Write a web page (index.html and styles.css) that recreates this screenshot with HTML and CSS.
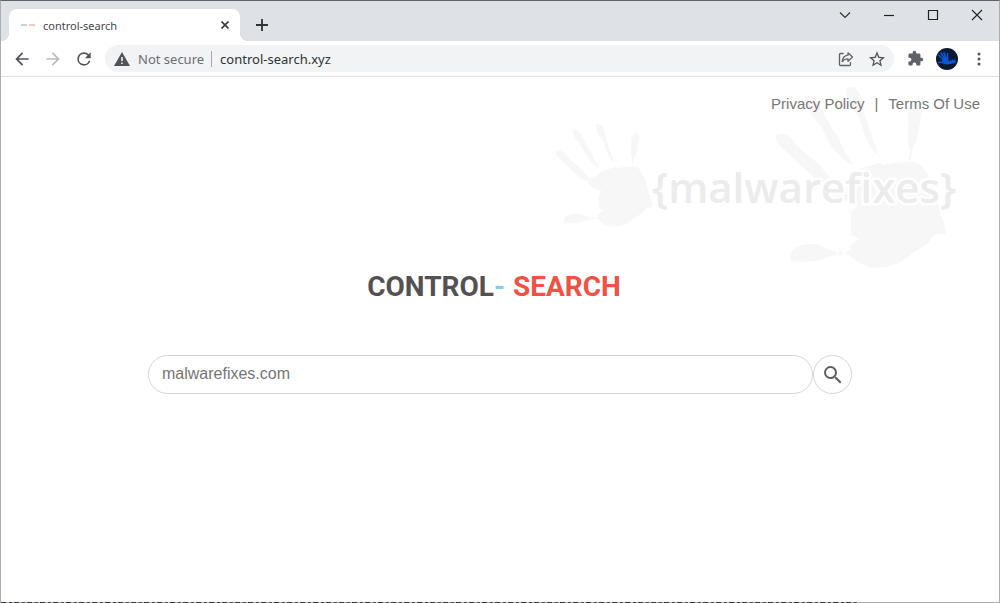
FILE: index.html
```html
<!DOCTYPE html>
<html lang="en">
<head>
    <meta charset="UTF-8">
    <meta name="viewport" content="width=device-width, initial-scale=1.0">
    <title>control-search</title>
    <link rel="stylesheet" href="styles.css">
</head>
<body>
    <div class="window">
        <header class="tab-bar">
            <div class="tab">
                <span class="favicon"></span>
                <span class="tab-title">control-search</span>
                <button class="icon-btn tab-close" aria-label="Close tab">
                    <svg width="8" height="8" viewBox="0 0 8 8"><path d="M.5.5l7 7M7.5.5l-7 7" stroke="#3c4043" stroke-width="1.7"/></svg>
                </button>
            </div>
            <button class="icon-btn new-tab" aria-label="New tab">
                <svg width="12" height="12" viewBox="0 0 12 12"><path d="M6 0v12M0 6h12" stroke="#303236" stroke-width="1.8"/></svg>
            </button>
            <div class="window-controls">
                <button class="icon-btn" aria-label="Search tabs">
                    <svg width="12" height="12" viewBox="0 0 12 12"><path d="M1 3.5l5 5 5-5" fill="none" stroke="#333" stroke-width="1.2"/></svg>
                </button>
                <button class="icon-btn" aria-label="Minimize">
                    <svg width="12" height="12" viewBox="0 0 12 12"><path d="M1 6.5h10" stroke="#222" stroke-width="1.2"/></svg>
                </button>
                <button class="icon-btn" aria-label="Maximize">
                    <svg width="12" height="12" viewBox="0 0 12 12"><path d="M1.5 1.5h9v9h-9z" fill="none" stroke="#222" stroke-width="1.2"/></svg>
                </button>
                <button class="icon-btn" aria-label="Close">
                    <svg width="12" height="12" viewBox="0 0 12 12"><path d="M1 1l10 10M11 1L1 11" stroke="#222" stroke-width="1.1"/></svg>
                </button>
            </div>
        </header>

        <div class="toolbar">
            <nav class="nav-buttons">
                <button class="icon-btn" aria-label="Back">
                    <svg width="20" height="20" viewBox="0 0 24 24"><path fill="#505357" d="M20 11H7.83l5.59-5.59L12 4l-8 8 8 8 1.41-1.41L7.83 13H20z"/></svg>
                </button>
                <button class="icon-btn" aria-label="Forward" disabled>
                    <svg width="20" height="20" viewBox="0 0 24 24"><path fill="#babcbe" d="M12 4l-1.41 1.41L16.17 11H4v2h12.17l-5.58 5.59L12 20l8-8z"/></svg>
                </button>
                <button class="icon-btn" aria-label="Reload">
                    <svg width="20" height="20" viewBox="0 0 24 24"><path fill="#505357" d="M17.65 6.35A7.96 7.96 0 0 0 12 4a8 8 0 1 0 7.73 10h-2.08A6 6 0 1 1 12 6c1.66 0 3.14.69 4.22 1.78L13 11h7V4z"/></svg>
                </button>
            </nav>
            <div class="address-bar">
                <svg width="16" height="14" viewBox="0 0 16 14"><path fill="#505357" d="M8 0l8 14H0z"/><path d="M8 5v4M8 10.5v1.6" stroke="#f1f3f4" stroke-width="1.6"/></svg>
                <label class="security" for="url">Not secure</label>
                <input class="url" id="url" type="text" value="control-search.xyz">
                <button class="icon-btn" aria-label="Share this page">
                    <svg width="16" height="16" viewBox="0 0 16 16" fill="none" stroke="#5f6368" stroke-width="1.3" stroke-linejoin="round"><path d="M5.5 2.5h-3a1 1 0 0 0-1 1v10a1 1 0 0 0 1 1h9a1 1 0 0 0 1-1V11"/><path d="M10 1.8L14.5 6 10 10.2V7.8C7.4 7.8 5.6 8.6 4.2 10.5 4.6 7 6.5 4.6 10 4.200z"/></svg>
                </button>
                <button class="icon-btn" aria-label="Bookmark this page">
                    <svg width="16" height="16" viewBox="0 0 24 24"><path fill="#505357" d="M24 9.24l-8.630-.740L12 .5 8.630 8.500 0 9.240l6.550 5.680L4.580 23.400 12 18.900l7.420 4.500-1.970-8.480zM12 16.650l-4.520 2.730 1.200-5.140-3.980-3.450 5.250-.450L12 5.500l2.050 4.840 5.250.450-3.980 3.450 1.200 5.140z"/></svg>
                </button>
            </div>
            <div class="actions">
                <button class="icon-btn" aria-label="Extensions">
                    <svg width="17" height="17" viewBox="0 0 24 24"><path fill="#5f6368" d="M20.5 11H19V7a2 2 0 0 0-2-2h-4V3.500a2.500 2.500 0 0 0-5 0V5H4a2 2 0 0 0-2 2v3.800h1.500a2.700 2.700 0 0 1 0 5.400H2V20a2 2 0 0 0 2 2h3.800v-1.500a2.700 2.700 0 0 1 5.400 0V22H17a2 2 0 0 0 2-2v-4h1.500a2.500 2.500 0 0 0 0-5z"/></svg>
                </button>
                <button class="icon-btn" aria-label="Profile">
                    <svg width="22" height="22" viewBox="0 0 22 22">
                        <circle cx="11" cy="11" r="11" fill="#0b1a30"/>
                        <g stroke="#0a56d6" stroke-width="1.6" stroke-linecap="round"><path d="M2.500 7l5 4.500M5 5l4 6M8 4.500l2 6M11.500 5.500V11M2.500 14.500l5-.500"/></g>
                        <path fill="#0a56d6" d="M6 11l5.500-2 1.500 5 1-2.500 1.500 1.500 1-2 1 1.500 2-1.500V15l-5 1-4 .500-4-1z"/>
                    </svg>
                </button>
                <button class="icon-btn" aria-label="Menu">
                    <svg width="4" height="14" viewBox="0 0 4 14" fill="#505357"><circle cx="2" cy="2" r="1.500"/><circle cx="2" cy="7" r="1.500"/><circle cx="2" cy="12" r="1.500"/></svg>
                </button>
            </div>
        </div>

        <main class="page">
            <svg class="watermark" width="410" height="190" viewBox="550 80 410 190">
                <defs>
                    <g id="hand" fill="#f7f7f7">
                        <path d="M48 214C58 209 70 213 76 222C86 236 99 246 112 256C124 266 136 280 148 296L162 291C171 289 176 280 185 274C197 267 211 268 224 261L232 265L252 261L282 259C298 262 306 276 312 292C321 308 324 330 329 350C333 360 340 372 338 382L318 384L308 398C294 408 276 419 263 430C247 438 229 442 216 440C198 439 184 430 175 420L164 415L174 411L176 402L190 391L177 385C175 370 175 354 178 343L188 335C172 330 158 322 148 316L144 304C132 304 118 292 108 282C94 269 80 256 68 244C58 236 46 229 48 214z"/>
                        <path d="M98 149C108 144 119 153 124 166C130 179 138 190 144 204C154 214 160 230 167 246L181 266C164 259 152 245 143 233C136 222 131 210 124 198C112 184 97 166 98 149z"/>
                        <path d="M167 136C173 128 184 130 189 140C195 152 197 168 200 182C207 197 212 216 218 233L222 248C211 239 204 226 199 211L188 180C178 170 168 153 167 136z"/>
                        <path d="M276 170C279 157 290 153 296 163C300 176 294 190 292 204C291 218 285 230 280 242L278 257L275 256L277 240C272 226 273 210 275 196C273 186 273 179 276 170z"/>
                        <path d="M72 421C75 405 94 399 112 400C127 401 136 410 150 413L154 417C142 418 134 426 120 428C104 430 84 432 72 428z"/>
                        <circle cx="159" cy="415" r="4"/>
                    </g>
                </defs>
                <use href="#hand" transform="translate(540 80) scale(.333)"/>
                <use href="#hand" transform="translate(748 10) scale(.585)"/>
                <text class="watermark-text" x="652" y="203">{malwarefixes}</text>
            </svg>

            <nav class="page-links">
                <a href="#">Privacy Policy</a>
                <span>|</span>
                <a href="#">Terms Of Use</a>
            </nav>

            <h1 class="logo">CONTROL<span class="dash">-</span><span class="accent">SEARCH</span></h1>

            <form class="search">
                <input class="search-input" type="text" value="malwarefixes.com" aria-label="Search">
                <button class="search-btn" type="submit" aria-label="Search">
                    <svg width="24" height="24" viewBox="0 0 24 24"><path fill="#5f5f5f" d="M15.5 14h-.79l-.28-.27A6.470 6.470 0 0 0 16 9.500 6.500 6.500 0 1 0 9.500 16c1.610 0 3.090-.590 4.230-1.570l.270.280v.790l5 4.990L20.490 19zm-6 0a4.500 4.500 0 1 1 0-9 4.500 4.500 0 0 1 0 9z"/></svg>
                </button>
            </form>
        </main>
        <div class="edge"></div>
    </div>
</body>
</html>
```
FILE: styles.css
```css
* {
    box-sizing: border-box;
}

body {
    margin: 0;
    background: #fff;
    font-family: "Liberation Sans", Arial, sans-serif;
}

.window {
    display: flex;
    flex-direction: column;
    min-height: 100vh;
    border: 1px solid #adadad;
    border-top-color: #626366;
    border-bottom: 0;
}

.icon-btn {
    display: flex;
    align-items: center;
    justify-content: center;
    padding: 0;
    border: 0;
    background: none;
}

.tab-bar {
    display: flex;
    height: 40px;
    padding-left: 8px;
    background: #dee1e6;
}

.tab {
    position: relative;
    display: flex;
    align-items: center;
    width: 231px;
    margin-top: 8px;
    padding: 0 9px 0 12px;
    background: #fff;
    border-radius: 8px 8px 0 0;
}

/* curved feet of the active tab */
.tab::before,
.tab::after {
    content: '';
    position: absolute;
    bottom: 0;
    width: 8px;
    height: 8px;
}

.tab::before {
    left: -8px;
    background: radial-gradient(circle at 0 0, #dee1e6 8px, #fff 8px);
}

.tab::after {
    right: -8px;
    background: radial-gradient(circle at 100% 0, #dee1e6 8px, #fff 8px);
}

.favicon {
    width: 14px;
    height: 2px;
    margin-right: 8px;
    background: linear-gradient(90deg, #cfcfcf 6px, #fff 6px, #fff 8px, #f3c9c1 8px);
}

.tab-title {
    flex: 1;
    font: 11px "Noto Sans", sans-serif;
    color: #45474a;
}

.tab-close {
    width: 12px;
    height: 16px;
}

.new-tab {
    width: 28px;
    margin: 8px 0 0 8px;
}

.window-controls {
    display: flex;
    margin-left: auto;
}

.window-controls .icon-btn {
    width: 44px;
    height: 28px;
}

.toolbar {
    display: flex;
    align-items: center;
    height: 36px;
    padding: 0 12px 0 11px;
    border-bottom: 1px solid #dcdee0;
}

.nav-buttons {
    display: flex;
    gap: 11px;
    margin-right: 11px;
}

.address-bar {
    display: flex;
    flex: 1;
    align-items: center;
    height: 27px;
    padding: 0 9px;
    background: #f1f3f4;
    border-radius: 14px;
    font: 13px "Noto Sans", sans-serif;
}

.security {
    margin: 0 8px;
    padding-right: 7px;
    border-right: 1px solid #a5a8ab;
    line-height: 16px;
    color: #6a6e72;
}

.url {
    flex: 1;
    min-width: 0;
    padding: 0;
    border: 0;
    background: none;
    font: inherit;
    color: #303236;
}

.address-bar .icon-btn {
    margin-left: 15px;
}

.actions {
    display: flex;
    align-items: center;
    gap: 12px;
    padding-left: 13px;
}

.actions .icon-btn {
    min-width: 17px;
}

.page {
    position: relative;
    flex: 1;
    padding: 16px 19px;
}

.watermark {
    position: absolute;
    top: 3px;
    right: 39px;
}

.watermark-text {
    font: 600 42px "Open Sans", sans-serif;
    fill: #ececec;
    stroke: #fff;
    stroke-width: 5px;
    stroke-linejoin: round;
    paint-order: stroke;
}

.page-links {
    position: relative;
    display: flex;
    justify-content: flex-end;
    gap: 10px;
    font-size: 15px;
    line-height: 22px;
    color: #767676;
}

.page-links a {
    color: inherit;
    text-decoration: none;
}

.logo {
    position: relative;
    margin: 155px 0 0;
    padding-right: 12px;
    font: 700 28px/34px Roboto, sans-serif;
    text-align: center;
    color: #555153;
}

.dash {
    margin-right: 8px;
    color: #84c9ee;
}

.accent {
    color: #ef5244;
}

.search {
    display: flex;
    width: 74%;
    max-width: 704px;
    margin: 51px auto 0;
}

.search-input {
    flex: 1;
    min-width: 0;
    height: 39px;
    padding: 0 13px 2px;
    border: 1px solid #d4d5d8;
    border-radius: 20px;
    background: #fff;
    font: 16px "Liberation Sans", Arial, sans-serif;
    color: #757575;
}

.search-btn {
    display: flex;
    align-items: center;
    justify-content: center;
    width: 39px;
    height: 39px;
    padding: 0;
    border: 1px solid #d4d5d8;
    border-radius: 50%;
    background: #fff;
}

/* sliver of the document behind the window */
.edge {
    height: 1px;
    background: repeating-linear-gradient(90deg, #333 0 5px, #aaa 5px 8px, #445 8px 11px, #bbb 11px 13px) 0 0 / 86% 1px no-repeat #adadad;
}
```
